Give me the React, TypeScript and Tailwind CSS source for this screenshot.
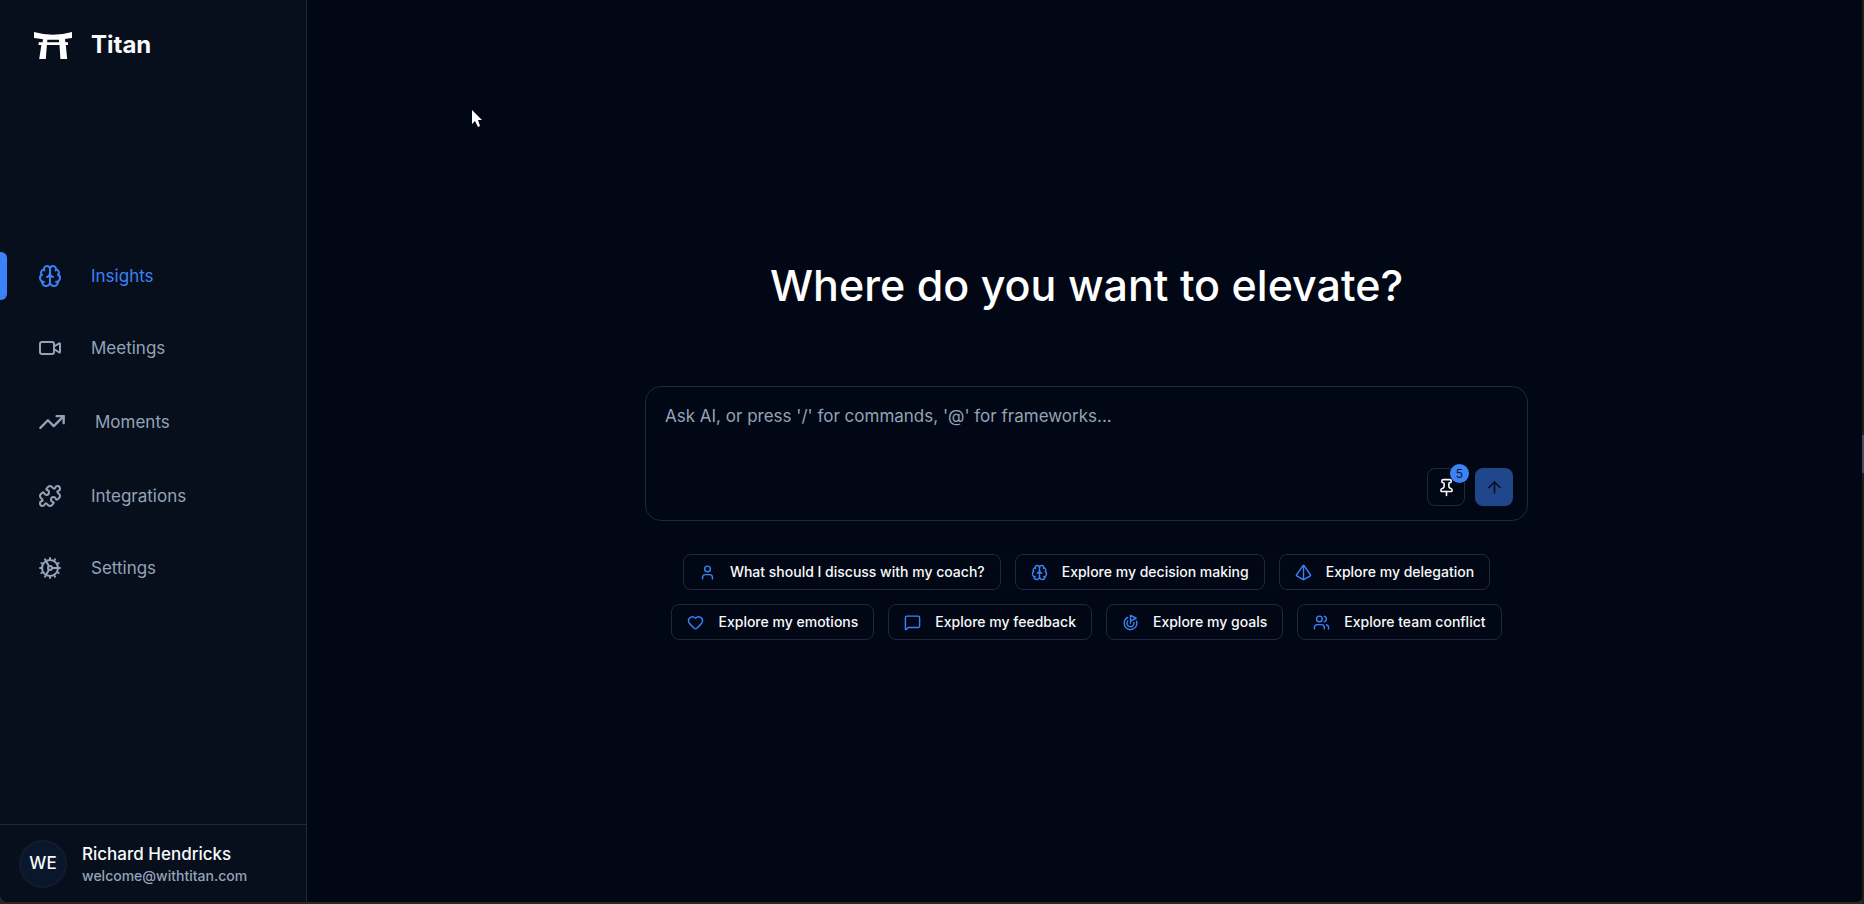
import React from "react";
import {
  ArrowUp,
  Brain,
  Cog,
  Goal,
  Heart,
  MessageSquare,
  Pin,
  Puzzle,
  Pyramid,
  TrendingUp,
  User,
  Users,
  Video,
  type LucideIcon,
} from "lucide-react";

const navItems: { label: string; icon: LucideIcon; active?: boolean; large?: boolean }[] = [
  { label: "Insights", icon: Brain, active: true },
  { label: "Meetings", icon: Video },
  { label: "Moments", icon: TrendingUp, large: true },
  { label: "Integrations", icon: Puzzle },
  { label: "Settings", icon: Cog },
];

const suggestionRows: { label: string; icon: LucideIcon }[][] = [
  [
    { label: "What should I discuss with my coach?", icon: User },
    { label: "Explore my decision making", icon: Brain },
    { label: "Explore my delegation", icon: Pyramid },
  ],
  [
    { label: "Explore my emotions", icon: Heart },
    { label: "Explore my feedback", icon: MessageSquare },
    { label: "Explore my goals", icon: Goal },
    { label: "Explore team conflict", icon: Users },
  ],
];

function ToriiLogo() {
  return (
    <svg viewBox="0 0 38 27" className="h-[27px] w-[38px] text-white" fill="currentColor" aria-hidden="true">
      <path d="M0 0 Q10 2.8 19 2.8 T38 0 V6 Q34 6.6 31 7.1 L31.4 10.3 H34 V13 H31.8 L33.2 27 H26.4 L25.5 13 H12.9 L11.8 27 H5.2 L7.4 13 H4.6 V10.3 H8.6 L9 7.3 Q4 6.6 0 6 Z M13.4 7.8 L13.1 10.3 H25.1 L24.9 7.8 Z" fillRule="evenodd" />
    </svg>
  );
}

function Sidebar() {
  return (
    <aside className="flex w-[307px] shrink-0 flex-col border-r border-[#1e293b] bg-[#070e1c]">
      <div className="flex items-center gap-[19px] px-[34px] pt-[29px]">
        <ToriiLogo />
        <span className="text-2xl leading-8 font-bold text-[#f8fafc]">Titan</span>
      </div>
      <nav className="flex flex-1 flex-col justify-center gap-6 pb-[42px]">
        {navItems.map(({ label, icon: Icon, active, large }) => (
          <a
            key={label}
            href="#"
            className={`flex items-center text-[17px] leading-6 ${active ? "text-[#3b82f6]" : "text-[#94a3b8]"}`}
          >
            <span className={`h-12 w-[7px] rounded-r-md ${active ? "bg-[#3b82f6]" : ""}`} />
            <span className="flex items-center gap-[29px] py-3 pl-[31px]">
              <Icon className={large ? "size-7" : "size-6"} />
              {label}
            </span>
          </a>
        ))}
      </nav>
      <div className="flex items-center gap-[15px] border-t border-[#1e293b] px-[19px] pt-[15px] pb-[14px]">
        <div className="flex size-12 items-center justify-center rounded-full border-2 border-[#111c2e] bg-[#0a162b] text-[17px] font-medium text-[#f8fafc]">
          WE
        </div>
        <div className="flex flex-col">
          <span className="text-[17px] leading-6 font-medium text-[#f8fafc]">Richard Hendricks</span>
          <span className="text-sm leading-5 font-medium text-[#94a3b8]">welcome@withtitan.com</span>
        </div>
      </div>
    </aside>
  );
}

function Composer() {
  return (
    <form
      className="flex w-full flex-col rounded-2xl border border-[#1e293b] pt-[17px] pr-[14px] pb-[14px] pl-[19px]"
      onSubmit={(event) => event.preventDefault()}
    >
      <textarea
        aria-label="Ask AI"
        placeholder="Ask AI, or press '/' for commands, '@' for frameworks..."
        className="h-16 w-full resize-none bg-transparent text-[17px] leading-6 text-[#f8fafc] outline-none placeholder:text-[#94a3b8]"
      />
      <div className="flex justify-end gap-[10px]">
        <button
          type="button"
          aria-label="Pinned"
          className="relative flex size-[38px] items-center justify-center rounded-lg border border-[#1e293b] text-[#f8fafc]"
        >
          <Pin className="size-[19px]" />
          <span className="absolute -top-[5px] -right-[5px] flex size-[19px] items-center justify-center rounded-full bg-[#3b82f6] text-xs text-[#0f172a]">
            5
          </span>
        </button>
        <button
          type="submit"
          aria-label="Send"
          className="flex size-[38px] items-center justify-center rounded-lg bg-[#1f458a] text-[#08101f]"
        >
          <ArrowUp className="size-[19px]" />
        </button>
      </div>
    </form>
  );
}

export default function App() {
  return (
    <div className="relative flex min-h-screen bg-[#2a2725] pb-[2px] font-['Inter',sans-serif]">
      <div className="flex flex-1 overflow-hidden rounded-b-lg bg-[#010714]">
        <Sidebar />
        <main className="flex flex-1 flex-col items-center justify-center pb-[2px] pl-[2px]">
          <div className="flex w-full max-w-[883px] flex-col items-center">
            <h1 className="text-[43px] leading-[50px] font-medium text-white">Where do you want to elevate?</h1>
            <div className="mt-[76px] w-full">
              <Composer />
            </div>
            <div className="mt-[33px] flex flex-col items-center gap-[14px]">
              {suggestionRows.map((row, index) => (
                <div key={index} className="flex flex-wrap justify-center gap-[14px]">
                  {row.map(({ label, icon: Icon }) => (
                    <button
                      key={label}
                      type="button"
                      className="flex h-9 items-center gap-[14px] rounded-lg border border-[#1e293b] px-[15px] text-sm leading-5 font-medium text-[#f8fafc]"
                    >
                      <Icon className="size-[17px] text-[#3b82f6]" />
                      {label}
                    </button>
                  ))}
                </div>
              ))}
            </div>
          </div>
        </main>
      </div>
      <div className="absolute inset-y-0 right-0 flex w-[2px] flex-col justify-center bg-[#1f1f21] pt-1">
        <div className="h-[38px] bg-[#4a4b53]" />
      </div>
      <svg viewBox="0 0 12 18" className="absolute top-[110px] left-[471px] h-[18px] w-3" fill="#ffffff" aria-hidden="true">
        <path d="M1 0v14l3-3 3 6 2-1-2-6h4z" />
      </svg>
    </div>
  );
}
